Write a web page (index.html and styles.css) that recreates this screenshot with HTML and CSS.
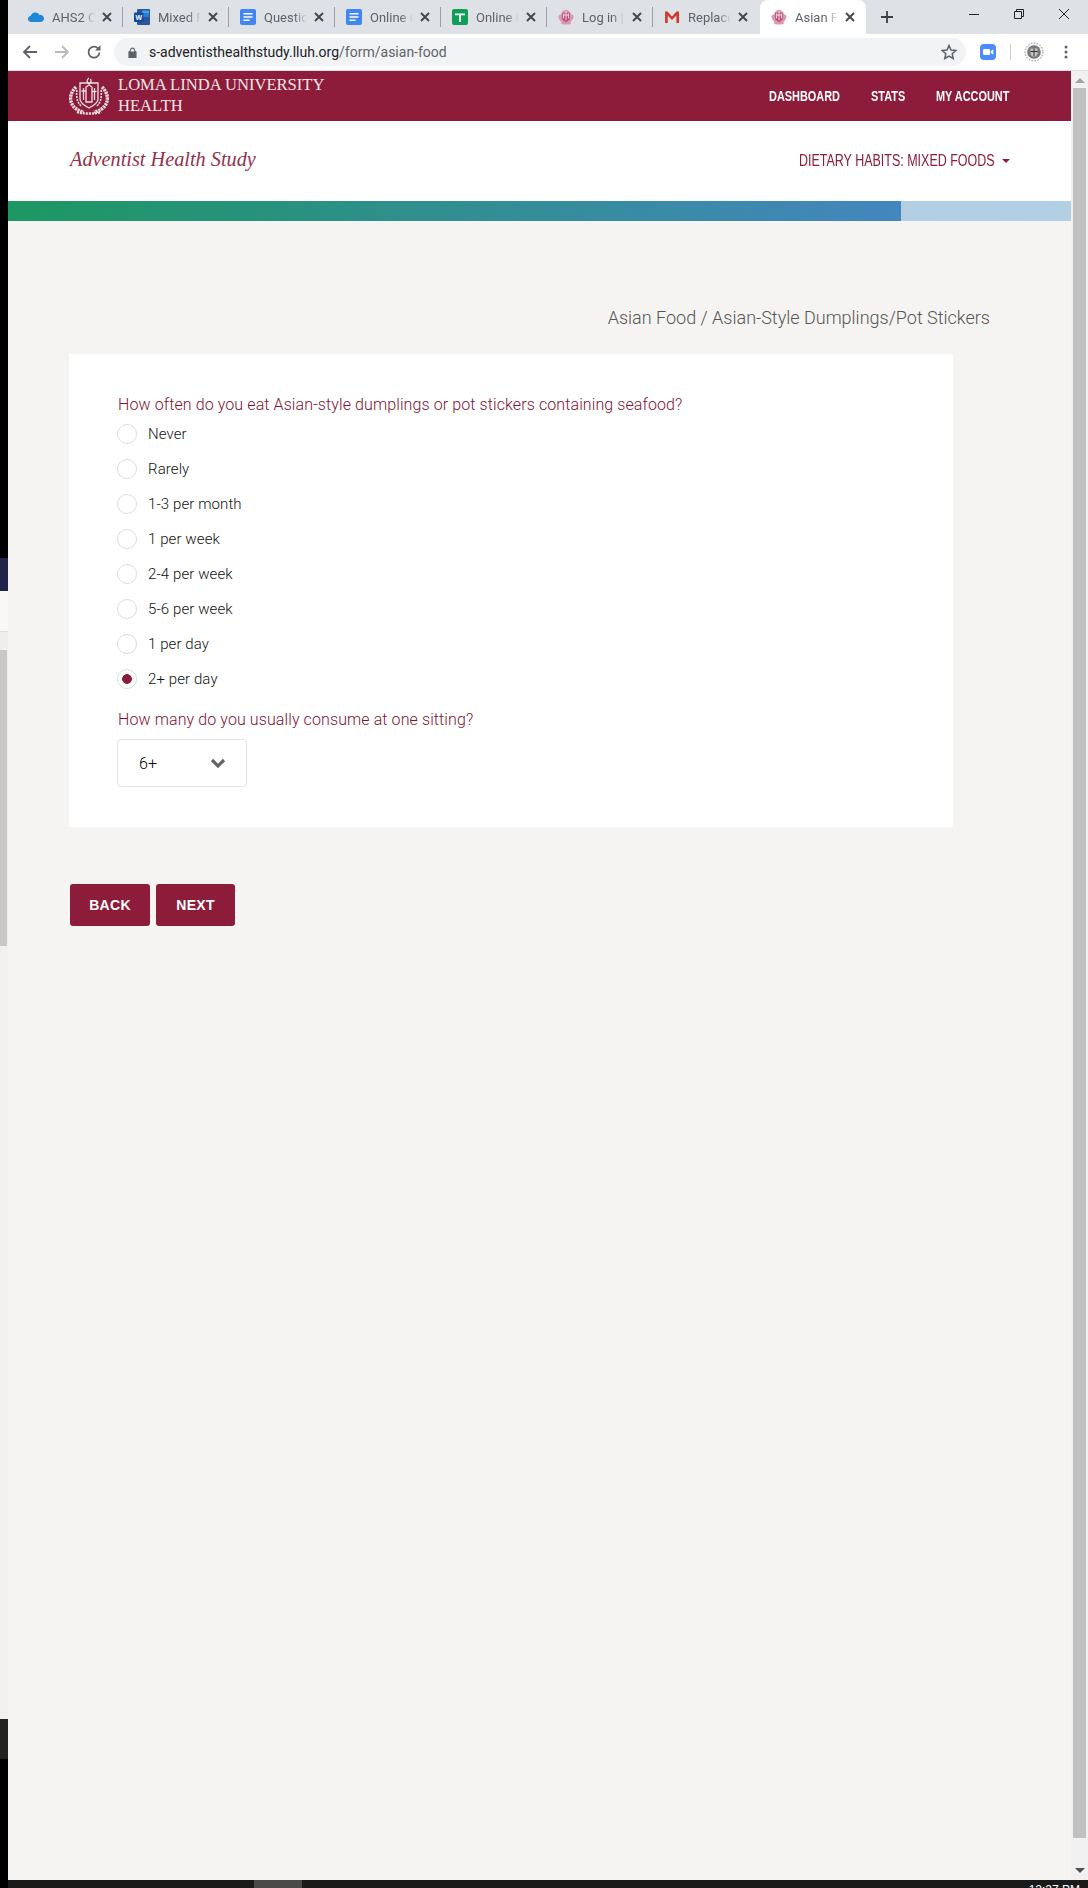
FILE: index.html
```html
<!DOCTYPE html>
<html lang="en">
<head>
  <meta charset="UTF-8">
  <title>Asian Food</title>
  <link rel="stylesheet" href="styles.css">
</head>
<body>
  <svg class="defs" width="0" height="0">
    <symbol id="doc" viewBox="0 0 16 16">
      <rect width="16" height="16" rx="2" fill="#4285f4"/>
      <path d="M3.500 4h9v1.600h-9zM3.500 7.200h9v1.600h-9zM3.500 10.400h6v1.600h-6z" fill="#fff"/>
    </symbol>
    <symbol id="crown" viewBox="0 0 16 16">
      <path d="M3 5.500C1.300 5.300.2 6.500.5 8c.4 2 1.500 3.700 3 5l-.3 2c3.100.8 6.500.8 9.600 0l-.3-2c1.500-1.300 2.600-3 3-5 .3-1.500-.8-2.700-2.500-2.500C12.500 3 10.500 1 8 .8 5.500 1 3.500 3 3 5.500z" fill="#dd97b2"/>
      <path d="M4.300 3.800h7.400v6.700L8 13.300l-3.700-2.800z" fill="#b4476f"/>
      <path d="M8 2.500v9M6 6h4M5.600 4.500v5M10.400 4.500v5" fill="none" stroke="#f6dfe8" stroke-width="1"/>
    </symbol>
    <symbol id="close" viewBox="0 0 10 10">
      <path d="M1 1l8 8M9 1l-8 8" fill="none" stroke="#44474b" stroke-width="1.900"/>
    </symbol>
  </svg>

  <div class="left-strip">
    <div class="strip-black"></div>
    <div class="strip-navy"></div>
    <div class="strip-white"></div>
    <div class="strip-arrow"></div>
    <div class="strip-thumb"></div>
    <div class="strip-track"></div>
    <div class="strip-dark"></div>
    <div class="strip-end"></div>
  </div>

  <div class="window">
    <div class="tabstrip">
      <div class="tab">
        <svg class="favicon" viewBox="0 0 16 16"><path d="M3.500 13C1.500 13 0 11.700 0 10c0-1.500 1.100-2.700 2.600-2.900C3.200 5 5 3.500 7.200 3.500c1.700 0 3.200.9 4 2.300 2.700-.2 4.800 1.500 4.800 3.700 0 2-1.600 3.500-3.600 3.500z" fill="#1d87d9"/></svg>
        <span class="tab-title">AHS2 O</span>
        <svg class="tab-close"><use href="#close"/></svg>
      </div>
      <i class="tab-sep"></i>
      <div class="tab">
        <svg class="favicon" viewBox="0 0 16 16"><rect x="3" width="13" height="16" rx="1" fill="#2b579a"/><rect x="8" y="1.500" width="7" height="3" fill="#41a5ee"/><rect x="8" y="5" width="7" height="3" fill="#2b7cd3"/><rect y="3.500" width="9.500" height="9.500" rx="1" fill="#124a9c"/><text x="1.500" y="11" class="word-w">W</text></svg>
        <span class="tab-title">Mixed F</span>
        <svg class="tab-close"><use href="#close"/></svg>
      </div>
      <i class="tab-sep"></i>
      <div class="tab">
        <svg class="favicon"><use href="#doc"/></svg>
        <span class="tab-title">Questio</span>
        <svg class="tab-close"><use href="#close"/></svg>
      </div>
      <i class="tab-sep"></i>
      <div class="tab">
        <svg class="favicon"><use href="#doc"/></svg>
        <span class="tab-title">Online C</span>
        <svg class="tab-close"><use href="#close"/></svg>
      </div>
      <i class="tab-sep"></i>
      <div class="tab">
        <svg class="favicon" viewBox="0 0 16 16"><rect width="16" height="16" rx="2" fill="#0f9d58"/><path d="M3 4.500h10v1.800H8.900V13H7.100V6.300H3z" fill="#fff"/></svg>
        <span class="tab-title">Online C</span>
        <svg class="tab-close"><use href="#close"/></svg>
      </div>
      <i class="tab-sep"></i>
      <div class="tab">
        <svg class="favicon"><use href="#crown"/></svg>
        <span class="tab-title">Log in |</span>
        <svg class="tab-close"><use href="#close"/></svg>
      </div>
      <i class="tab-sep"></i>
      <div class="tab tab-wide">
        <svg class="favicon" viewBox="0 0 16 16"><path d="M1 2.500h2.500L8 7.500l4.500-5H15V14h-2.600V6.500L8 11 3.600 6.500V14H1z" fill="#d0392b"/><path d="M3.600 6.500V14H1V2.500z" fill="#c5493d"/></svg>
        <span class="tab-title">Replace</span>
        <svg class="tab-close"><use href="#close"/></svg>
      </div>
      <div class="tab tab-active">
        <svg class="favicon"><use href="#crown"/></svg>
        <span class="tab-title">Asian Fo</span>
        <svg class="tab-close"><use href="#close"/></svg>
      </div>
      <svg class="new-tab" viewBox="0 0 12 12"><path d="M6 0v12M0 6h12" fill="none" stroke="#3c4043" stroke-width="1.800"/></svg>
      <div class="win-controls">
        <svg class="win-icon" viewBox="0 0 12 12"><path d="M1 6.500h10" fill="none" stroke="#222" stroke-width="1"/></svg>
        <svg class="win-icon" viewBox="0 0 12 12"><path d="M1.500 3.500h7v7h-7zM3.500 3.500v-2h7v7h-2" fill="none" stroke="#222" stroke-width="1"/></svg>
        <svg class="win-icon" viewBox="0 0 12 12"><path d="M1 1l10 10M11 1L1 11" fill="none" stroke="#222" stroke-width="1"/></svg>
      </div>
    </div>

    <div class="toolbar">
      <svg class="tool-icon" viewBox="0 0 16 16"><path d="M15 8H2M8 2L2 8l6 6" fill="none" stroke="#5f6368" stroke-width="1.800"/></svg>
      <svg class="tool-icon" viewBox="0 0 16 16"><path d="M1 8h13M8 2l6 6-6 6" fill="none" stroke="#b9bbbe" stroke-width="1.800"/></svg>
      <svg class="tool-icon" viewBox="0 0 16 16"><path d="M13.500 8.500A5.500 5.500 0 1 1 12 4.300" fill="none" stroke="#5f6368" stroke-width="1.800"/><path d="M14.500 1v5.500H9z" fill="#5f6368"/></svg>
      <div class="omnibox">
        <svg class="lock" viewBox="0 0 10 12"><path d="M2.500 5V3.500a2.500 2.500 0 0 1 5 0V5M1 5h8v7H1z" fill="#5f6368" stroke="#5f6368" stroke-width="1" fill-rule="evenodd"/><path d="M3.200 5V3.500a1.800 1.800 0 0 1 3.600 0V5z" fill="#f1f3f4"/></svg>
        <span class="url"><b>s-adventisthealthstudy.lluh.org</b>/form/asian-food</span>
        <svg class="star" viewBox="0 0 16 16"><path d="M8 1.500l2 4.500 4.800.5-3.600 3.200 1 4.800L8 12l-4.200 2.500 1-4.800L1.200 6.500 6 6z" fill="none" stroke="#5f6368" stroke-width="1.500"/></svg>
      </div>
      <svg class="zoom-ext" viewBox="0 0 16 16"><rect width="16" height="16" rx="4" fill="#4a8cff"/><rect x="3" y="5" width="7" height="6" rx="1.300" fill="#fff"/><path d="M10.700 7.300L13.300 5.300v5.400l-2.600-2z" fill="#fff"/></svg>
      <i class="tool-sep"></i>
      <svg class="avatar" viewBox="0 0 20 20"><circle cx="10" cy="10" r="9" fill="#f4f4f4" stroke="#888" stroke-width="1" stroke-dasharray="1.500 1.500"/><circle cx="10" cy="10" r="6.800" fill="#77797b"/><path d="M6.500 6.500h7v5c0 1.800-2 3-3.500 3.500-1.500-.5-3.500-1.700-3.500-3.500z" fill="#c4c4c4"/><path d="M6.500 9.500h7M10 6.500v8" stroke="#333" stroke-width="1"/></svg>
      <svg class="dots" viewBox="0 0 4 14"><circle cx="2" cy="2" r="1.500" fill="#5f6368"/><circle cx="2" cy="7" r="1.500" fill="#5f6368"/><circle cx="2" cy="12" r="1.500" fill="#5f6368"/></svg>
    </div>

    <div class="page-row">
      <div class="page">
        <header class="topbar">
          <div class="brand">
            <svg class="crest" viewBox="0 0 40 38">
              <g fill="none" stroke="#f0dfe3">
                <path d="M7 10C2 15 0 21 3 27c2 4 6 7 12 8M33 10c5 5 7 11 4 17-2 4-6 7-12 8" stroke-width="3.400" stroke-dasharray="2.200 .8"/>
                <path d="M8 13c-1 6 0 12 4 16M32 13c1 6 0 12-4 16" stroke-width="1.600" stroke-dasharray="2 1"/>
                <path d="M11 6h18v16c0 4-5 7-9 9-4-2-9-5-9-9z" stroke-width="1.300"/>
                <path d="M17 10l3-2 3 2v15h-6zM20 1c-2.500 2-2.500 4 0 6 2-1 2.500-3 1.500-5M14.500 11v12M12.500 14h4M25.500 11v12M23.500 14.500h4" stroke-width="1.300"/>
                <path d="M8 35c4 2 20 2 24 0" stroke-width="2.400" stroke-dasharray="2 1"/>
              </g>
            </svg>
            <div class="brand-name">LOMA LINDA UNIVERSITY<br>HEALTH</div>
          </div>
          <nav class="topnav">
            <a class="nav-dash"><span>DASHBOARD</span></a>
            <a class="nav-stats"><span>STATS</span></a>
            <a class="nav-account"><span>MY ACCOUNT</span></a>
          </nav>
        </header>

        <div class="subbar">
          <div class="study-name">Adventist Health Study</div>
          <div class="section-menu"><span>DIETARY HABITS: MIXED FOODS</span><i class="caret"></i></div>
        </div>

        <div class="progress"><div class="progress-fill"></div></div>

        <main class="content">
          <div class="crumb">Asian Food / Asian-Style Dumplings/Pot Stickers</div>
          <section class="card">
            <div class="question">How often do you eat Asian-style dumplings or pot stickers containing seafood?</div>
            <ul class="options">
              <li><i class="radio"></i>Never</li>
              <li><i class="radio"></i>Rarely</li>
              <li><i class="radio"></i>1-3 per month</li>
              <li><i class="radio"></i>1 per week</li>
              <li><i class="radio"></i>2-4 per week</li>
              <li><i class="radio"></i>5-6 per week</li>
              <li><i class="radio"></i>1 per day</li>
              <li><i class="radio radio-on"></i>2+ per day</li>
            </ul>
            <div class="question question-2">How many do you usually consume at one sitting?</div>
            <div class="select">
              <span>6+</span>
              <svg class="chevron" viewBox="0 0 16 11"><path d="M2 2l6 6 6-6" fill="none" stroke="#666" stroke-width="3.200"/></svg>
            </div>
          </section>
          <div class="buttons">
            <a class="btn btn-back">BACK</a>
            <a class="btn btn-next">NEXT</a>
          </div>
        </main>
      </div>

      <div class="scrollbar">
        <i class="arrow-up"></i>
        <div class="thumb"></div>
        <i class="arrow-down"></i>
      </div>
    </div>

    <div class="taskbar">
      <div class="task-item"></div>
      <div class="clock">12:27 PM</div>
    </div>
  </div>
</body>
</html>
```
FILE: styles.css
```css
body,
div,
ul,
li,
a,
span,
section,
header,
nav,
main {
  margin: 0;
  border: 0;
  padding: 0;
  font-style: normal;
}

li {
  list-style: none;
}

i {
  display: block;
}

html,
body {
  height: 1888px;
  overflow: hidden;
}

body {
  display: flex;
  background: #000;
  font-family: Roboto, "Liberation Sans", sans-serif;
}

.defs {
  position: absolute;
}

/* desktop window peeking out at the left */
.left-strip {
  width: 8px;
  flex: none;
  display: flex;
  flex-direction: column;
}
.strip-black { height: 558px; background: #000; }
.strip-navy { height: 33px; background: #1f2448; }
.strip-white { height: 40px; background: #f8f8f8; }
.strip-arrow { height: 18px; background: #eee; border-top: 1px solid #ddd; }
.strip-thumb { height: 296px; width: 7px; background: #c8c8c8; box-shadow: 1px 0 0 #eee; }
.strip-track { height: 773px; background: #f0f0f0; }
.strip-dark { height: 40px; background: #222; }
.strip-end { flex: 1; background: #000; }

.window {
  flex: 1;
  min-width: 0;
  display: flex;
  flex-direction: column;
}

/* tabs */
.tabstrip {
  height: 34px;
  flex: none;
  display: flex;
  align-items: center;
  padding-left: 9px;
  background: #dee1e6;
}
.tab {
  width: 105px;
  height: 34px;
  flex: none;
  display: flex;
  align-items: center;
  padding-left: 11px;
  box-sizing: border-box;
}
.tab-wide {
  width: 107px;
}
.tab-active {
  width: 106px;
  background: #fff;
  border-radius: 8px 8px 0 0;
}
.tab-sep {
  width: 1px;
  height: 20px;
  background: #9aa0a6;
  flex: none;
}
.favicon {
  width: 16px;
  height: 16px;
  flex: none;
}
.word-w {
  font-family: "Liberation Sans", sans-serif;
  font-size: 7px;
  font-weight: bold;
  fill: #fff;
}
.tab-title {
  width: 43px;
  margin-left: 8px;
  flex: none;
  white-space: nowrap;
  font-size: 13px;
  color: #5f6368;
  -webkit-mask-image: linear-gradient(to right, #000 70%, transparent);
  mask-image: linear-gradient(to right, #000 70%, transparent);
}
.tab-close {
  width: 10px;
  height: 10px;
  margin-left: 7px;
  flex: none;
}
.new-tab {
  width: 12px;
  height: 12px;
  margin-left: 15px;
  flex: none;
}
.win-controls {
  display: flex;
  align-items: center;
  gap: 33px;
  margin-left: auto;
  margin-right: 18px;
  margin-top: -6px;
}
.win-icon {
  width: 12px;
  height: 12px;
}

/* address bar */
.toolbar {
  height: 37px;
  flex: none;
  box-sizing: border-box;
  display: flex;
  align-items: center;
  padding-left: 14px;
  background: #fff;
  border-bottom: 1px solid #dadce0;
}
.tool-icon {
  width: 16px;
  height: 16px;
  margin-right: 16px;
  flex: none;
}
.omnibox {
  width: 852px;
  height: 28px;
  margin-left: -4px;
  flex: none;
  box-sizing: border-box;
  display: flex;
  align-items: center;
  padding: 0 9px 0 14px;
  background: #f1f3f4;
  border-radius: 14px;
}
.lock {
  width: 9px;
  height: 11px;
  flex: none;
}
.url {
  margin-left: 12px;
  font-size: 14px;
  color: #5f6368;
  white-space: nowrap;
}
.url b {
  font-weight: 400;
  color: #202124;
}
.star {
  width: 16px;
  height: 16px;
  margin-left: auto;
}
.zoom-ext {
  width: 16px;
  height: 16px;
  margin-left: 14px;
  flex: none;
}
.tool-sep {
  width: 1px;
  height: 16px;
  margin-left: 14px;
  background: #ccc;
  flex: none;
}
.avatar {
  width: 20px;
  height: 20px;
  margin-left: 13px;
  flex: none;
}
.dots {
  width: 4px;
  height: 14px;
  margin-left: 20px;
  flex: none;
}

/* page */
.page-row {
  flex: 1;
  min-height: 0;
  display: flex;
}
.page {
  flex: 1;
  min-width: 0;
  background: #f5f4f2;
}
.topbar {
  height: 50px;
  display: flex;
  align-items: center;
  justify-content: space-between;
  padding: 0 61px;
  background: #8c1c3a;
}
.brand {
  display: flex;
  align-items: center;
}
.crest {
  width: 40px;
  height: 38px;
  flex: none;
}
.brand-name {
  margin: -2px 0 0 9px;
  font-family: "Liberation Serif", serif;
  font-size: 16.600px;
  line-height: 21px;
  color: #f3e6e9;
}
.topnav {
  display: flex;
  gap: 31px;
}
.topnav a {
  display: block;
  height: 17px;
  font-family: "Liberation Sans", sans-serif;
  font-size: 14px;
  line-height: 17px;
  font-weight: bold;
  color: #fff;
  white-space: nowrap;
}
/* no condensed family here, the face is squeezed sideways */
.topnav span,
.section-menu span {
  display: block;
  transform-origin: left center;
  white-space: nowrap;
}
.topnav span {
  transform: scaleX(.78);
}
.nav-dash { width: 71px; }
.nav-stats { width: 34px; }
.nav-account { width: 74px; }
.subbar {
  height: 80px;
  display: flex;
  align-items: center;
  justify-content: space-between;
  padding: 0 61px 0 62px;
  background: #fff;
}
.study-name {
  margin-top: -3px;
  font-family: "Liberation Serif", serif;
  font-style: italic;
  font-size: 20.300px;
  color: #96304b;
}
.section-menu {
  display: flex;
  align-items: center;
  font-family: "Liberation Sans", sans-serif;
  font-size: 16px;
  color: #8c1c3a;
}
.section-menu span {
  width: 197px;
  transform: scaleX(.78);
}
.caret {
  margin-left: 6px;
  border-top: 4px solid #8c1c3a;
  border-left: 4px solid transparent;
  border-right: 4px solid transparent;
}
.progress {
  height: 20px;
  background: linear-gradient(to right, #b0cee0, #b3cfe3);
}
.progress-fill {
  width: 893px;
  height: 100%;
  background: linear-gradient(to right, #1d9762, #4486bf);
}
.content {
  padding: 55px 0 0 61px;
}
.crumb {
  height: 24px;
  margin: 30px 81px 0 0;
  text-align: right;
  font-size: 18px;
  font-weight: 300;
  line-height: 24px;
  color: #555;
}
.card {
  width: 884px;
  height: 473px;
  margin-top: 24px;
  padding: 40px 0 0 48px;
  box-sizing: border-box;
  background: #fff;
}
.question {
  height: 22px;
  margin-left: 1px;
  font-size: 16px;
  font-weight: 300;
  line-height: 22px;
  letter-spacing: .1px;
  color: #7f1233;
}
.question-2 {
  margin-top: 13px;
}
.options li {
  height: 35px;
  display: flex;
  align-items: center;
  font-size: 15px;
  font-weight: 300;
  letter-spacing: .1px;
  color: #111;
}
.radio {
  width: 20px;
  height: 20px;
  margin-right: 11px;
  box-sizing: border-box;
  border: 1px solid #ddd;
  border-radius: 50%;
  background: #fff;
  flex: none;
}
.radio-on {
  background: radial-gradient(circle, #8c1c3a 4.500px, #fff 5.200px);
}
.select {
  width: 130px;
  height: 48px;
  margin-top: 8px;
  box-sizing: border-box;
  display: flex;
  align-items: center;
  justify-content: space-between;
  padding: 0 20px 0 21px;
  border: 1px solid #e3e3e3;
  border-radius: 4px;
  font-size: 16px;
  font-weight: 300;
  color: #000;
}
.chevron {
  width: 16px;
  height: 11px;
}
.buttons {
  display: flex;
  gap: 6px;
  margin: 57px 0 0 1px;
}
.btn {
  height: 42px;
  display: flex;
  align-items: center;
  justify-content: center;
  background: #8c1c3a;
  border-radius: 3px;
  font-family: "Liberation Sans", sans-serif;
  font-size: 14px;
  font-weight: bold;
  letter-spacing: .3px;
  color: #fff;
}
.btn-back { width: 80px; }
.btn-next { width: 79px; }

/* browser scrollbar */
.scrollbar {
  width: 17px;
  flex: none;
  display: flex;
  flex-direction: column;
  align-items: center;
  background: #f1f1f1;
}
.arrow-up {
  margin-top: 7px;
  border-bottom: 5px solid #a3a3a3;
  border-left: 5px solid transparent;
  border-right: 5px solid transparent;
}
.thumb {
  width: 13px;
  height: 1750px;
  margin-top: 5px;
  background: #c1c1c1;
}
.arrow-down {
  margin-top: 30px;
  border-top: 5px solid #505050;
  border-left: 5px solid transparent;
  border-right: 5px solid transparent;
}

.taskbar {
  height: 8px;
  flex: none;
  overflow: hidden;
  display: flex;
  justify-content: space-between;
  background: #1a1a1a;
}
.task-item {
  width: 48px;
  margin-left: 246px;
  background: #4a4a4a;
}
.clock {
  margin: 3px 8px 0 0;
  font-family: "Liberation Sans", sans-serif;
  font-size: 12px;
  line-height: 14px;
  color: #fff;
}
```
